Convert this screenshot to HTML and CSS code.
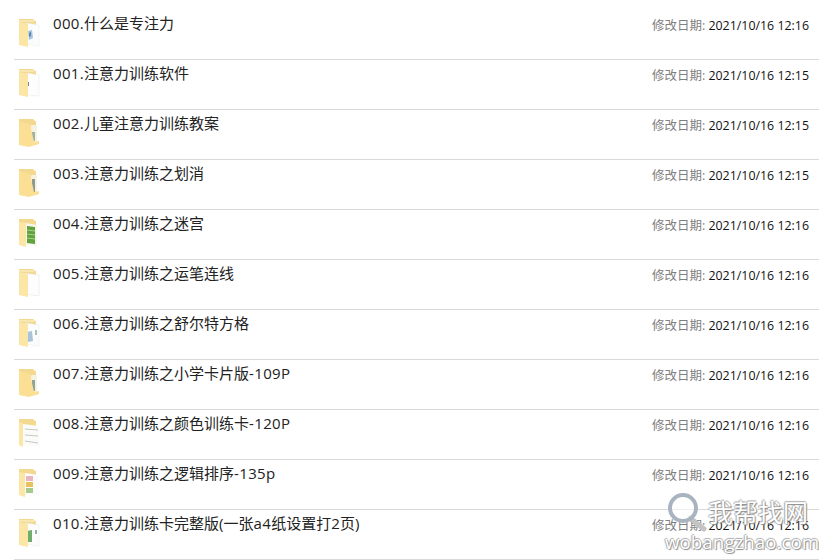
FILE: index.html
```html
<!DOCTYPE html>
<html lang="zh-CN">
<head>
    <meta charset="UTF-8">
    <meta name="viewport" content="width=device-width, initial-scale=1.0">
    <title>注意力训练</title>
    <link rel="stylesheet" href="styles.css">
</head>
<body>
    <svg class="defs" width="0" height="0">
        <symbol id="folder-back" viewBox="0 0 24 32">
            <path d="M2 2 L16 2 L18 4 L19 4 L19 26 L2 28 Z" fill="#f2d98f"/>
        </symbol>
        <symbol id="folder-front" viewBox="0 0 24 32">
            <path d="M2 5 L11 7 L11 30 L2 28 Z" fill="#fbe6a6"/>
            <path d="M2 3 L17 3 L17 5 L2 5 Z" fill="#f8e6b0"/>
        </symbol>
    </svg>

    <ul class="file-list">
        <li class="file-row">
            <svg class="folder" viewBox="0 0 24 32">
                <use href="#folder-back"/>
                <path d="M9 6 L22 8 L22 29 L9 27 Z" fill="#fbfcfd" stroke="#e6e8ea" stroke-width=".5"/>
                <path d="M11 14 L15 13 L16 21 L12 23 Z" fill="#a9c3dc"/>
                <path d="M12 16 L14 15 L14 19 L12 20 Z" fill="#5e86ad"/>
                <use href="#folder-front"/>
            </svg>
            <span class="file-name"><span class="latin">000.</span>什么是专注力</span>
            <span class="file-date"><span class="date-label">修改日期:</span> <span class="date-value">2021/10/16 12:16</span></span>
        </li>
        <li class="file-row">
            <svg class="folder" viewBox="0 0 24 32">
                <use href="#folder-back"/>
                <path d="M10 6 L22 8 L22 29 L10 28 Z" fill="#fdfdfe" stroke="#e6e8ea" stroke-width=".5"/>
                <rect x="10" y="15" width="2" height="4" fill="#7d8aa0"/>
                <use href="#folder-front"/>
            </svg>
            <span class="file-name"><span class="latin">001.</span>注意力训练软件</span>
            <span class="file-date"><span class="date-label">修改日期:</span> <span class="date-value">2021/10/16 12:15</span></span>
        </li>
        <li class="file-row">
            <svg class="folder" viewBox="0 0 24 32">
                <use href="#folder-back"/>
                <path d="M14 8 L20 8 L20 27 L14 28 Z" fill="#f5f2e0"/>
                <rect x="15" y="15" width="3" height="9" fill="#9fb0a4"/>
                <path d="M2 4 L13 7 L17 25 L22 24 L22 27 L12 30 L2 28 Z" fill="#fbdf94"/>
            </svg>
            <span class="file-name"><span class="latin">002.</span>儿童注意力训练教案</span>
            <span class="file-date"><span class="date-label">修改日期:</span> <span class="date-value">2021/10/16 12:15</span></span>
        </li>
        <li class="file-row">
            <svg class="folder" viewBox="0 0 24 32">
                <use href="#folder-back"/>
                <path d="M14 8 L20 8 L20 27 L14 28 Z" fill="#f5f2e0"/>
                <rect x="15" y="12" width="3" height="13" fill="#8d9a90"/>
                <path d="M2 4 L13 7 L17 25 L22 24 L22 27 L12 30 L2 28 Z" fill="#fbdf94"/>
            </svg>
            <span class="file-name"><span class="latin">003.</span>注意力训练之划消</span>
            <span class="file-date"><span class="date-label">修改日期:</span> <span class="date-value">2021/10/16 12:15</span></span>
        </li>
        <li class="file-row">
            <svg class="folder" viewBox="0 0 24 32">
                <use href="#folder-back"/>
                <path d="M9 6 L20 8 L20 29 L9 27 Z" fill="#f4f6ef"/>
                <path d="M10 9 L18 10 L18 27 L10 26 Z" fill="#5fa33a"/>
                <path d="M10 13 L18 14 M10 17 L18 18 M10 21 L18 22" stroke="#a8d08c"/>
                <path d="M2 5 L9 6 L9 30 L2 28 Z" fill="#fbe6a6"/>
            </svg>
            <span class="file-name"><span class="latin">004.</span>注意力训练之迷宫</span>
            <span class="file-date"><span class="date-label">修改日期:</span> <span class="date-value">2021/10/16 12:16</span></span>
        </li>
        <li class="file-row">
            <svg class="folder" viewBox="0 0 24 32">
                <use href="#folder-back"/>
                <path d="M8 6 L22 8 L22 29 L8 27 Z" fill="#fdfdfd" stroke="#dfe1e3" stroke-width=".5"/>
                <use href="#folder-front"/>
            </svg>
            <span class="file-name"><span class="latin">005.</span>注意力训练之运笔连线</span>
            <span class="file-date"><span class="date-label">修改日期:</span> <span class="date-value">2021/10/16 12:16</span></span>
        </li>
        <li class="file-row">
            <svg class="folder" viewBox="0 0 24 32">
                <use href="#folder-back"/>
                <path d="M9 6 L22 8 L22 29 L9 27 Z" fill="#fbfcfd" stroke="#e6e8ea" stroke-width=".5"/>
                <path d="M10 15 L15 14 L16 24 L11 25 Z" fill="#a9c3dc"/>
                <path d="M18 13 L20 13 L20 18 L18 18 Z" fill="#a4c4b4"/>
                <use href="#folder-front"/>
            </svg>
            <span class="file-name"><span class="latin">006.</span>注意力训练之舒尔特方格</span>
            <span class="file-date"><span class="date-label">修改日期:</span> <span class="date-value">2021/10/16 12:16</span></span>
        </li>
        <li class="file-row">
            <svg class="folder" viewBox="0 0 24 32">
                <use href="#folder-back"/>
                <path d="M14 8 L20 8 L20 27 L14 28 Z" fill="#f5f2e0"/>
                <rect x="15" y="13" width="3" height="11" fill="#8fa596"/>
                <path d="M2 4 L13 7 L17 25 L22 24 L22 27 L12 30 L2 28 Z" fill="#fbdf94"/>
            </svg>
            <span class="file-name"><span class="latin">007.</span>注意力训练之小学卡片版<span class="latin">-109P</span></span>
            <span class="file-date"><span class="date-label">修改日期:</span> <span class="date-value">2021/10/16 12:16</span></span>
        </li>
        <li class="file-row">
            <svg class="folder" viewBox="0 0 24 32">
                <use href="#folder-back"/>
                <path d="M6 7 L22 9 L22 29 L6 28 Z" fill="#fbfbf9"/>
                <path d="M8 12 L21 13 M8 18 L21 19 M8 24 L21 26" stroke="#b9b9b5" stroke-width=".8"/>
                <path d="M2 5 L6 6 L6 30 L2 28 Z" fill="#fbe6a6"/>
            </svg>
            <span class="file-name"><span class="latin">008.</span>注意力训练之颜色训练卡<span class="latin">-120P</span></span>
            <span class="file-date"><span class="date-label">修改日期:</span> <span class="date-value">2021/10/16 12:16</span></span>
        </li>
        <li class="file-row">
            <svg class="folder" viewBox="0 0 24 32">
                <use href="#folder-back"/>
                <path d="M8 6 L22 8 L22 29 L8 27 Z" fill="#fbfbfb"/>
                <rect x="9" y="9" width="7" height="5" fill="#e8b6c0"/>
                <rect x="9" y="15" width="7" height="5" fill="#e6c25a"/>
                <rect x="9" y="21" width="7" height="5" fill="#a5c98a"/>
                <path d="M2 5 L8 6 L8 30 L2 28 Z" fill="#fbe6a6"/>
            </svg>
            <span class="file-name"><span class="latin">009.</span>注意力训练之逻辑排序<span class="latin">-135p</span></span>
            <span class="file-date"><span class="date-label">修改日期:</span> <span class="date-value">2021/10/16 12:16</span></span>
        </li>
        <li class="file-row">
            <svg class="folder" viewBox="0 0 24 32">
                <use href="#folder-back"/>
                <path d="M9 6 L22 8 L22 29 L9 27 Z" fill="#fbfcfb" stroke="#e6e8ea" stroke-width=".5"/>
                <path d="M10 14 L15 13 L15 25 L10 25 Z" fill="#6fae6a"/>
                <rect x="18" y="13" width="2" height="4" fill="#8fb5a0"/>
                <use href="#folder-front"/>
            </svg>
            <span class="file-name"><span class="latin">010.</span>注意力训练卡完整版(一张<span class="latin">a4</span>纸设置打<span class="latin">2</span>页)</span>
            <span class="file-date"><span class="date-label">修改日期:</span> <span class="date-value">2021/10/16 12:16</span></span>
        </li>
    </ul>

    <div class="watermark">
        <svg class="magnifier" viewBox="0 0 48 40">
            <path d="M24 26 L38 37" stroke="#c4c4c4" stroke-width="5" stroke-linecap="round"/>
            <circle cx="17" cy="16" r="13" fill="#ffffff" fill-opacity=".55" stroke="#a9b4c0" stroke-width="4"/>
        </svg>
        <div class="mark-cn">我帮找网</div>
        <div class="mark-en">wobangzhao.com</div>
    </div>
</body>
</html>
```

FILE: styles.css
```css
html, body { margin: 0; padding: 0; }
body {
    width: 819px;
    height: 560px;
    overflow: hidden;
    position: relative;
    background: #fff;
    font-family: "Open Sans", "Noto Sans CJK SC", sans-serif;
    color: #222;
}
.defs { position: absolute; }
.file-list { list-style: none; margin: 0; padding: 10px 0 0 14px; }
.file-row {
    height: 49px;
    border-bottom: 1px solid #d9d9d9;
    display: flex;
    align-items: flex-start;
}
.folder { width: 24px; height: 32px; margin: 7px 0 0 3px; flex: none; filter: blur(.3px); }
.file-name {
    margin-left: 12px;
    font-size: 15px;
    line-height: 20px;
    margin-top: 3px;
    flex: 1;
    white-space: nowrap;
}
.latin { letter-spacing: .35px; }
.file-date {
    font-size: 12px;
    line-height: 18px;
    margin-top: 7px;
    margin-right: 10px;
    color: #111;
    white-space: nowrap;
}
.date-label { color: #808080; font-size: 12.5px; }
.date-value { font-size: 12.4px; }
.watermark {
    position: absolute;
    left: 664px;
    top: 490px;
    width: 155px;
    height: 66px;
}
.magnifier { position: absolute; left: 2px; top: 2px; width: 48px; height: 40px; }
.mark-cn {
    position: absolute;
    left: 44px;
    top: 6px;
    font-size: 25px;
    line-height: 30px;
    font-family: "Noto Sans CJK SC", sans-serif;
    color: #fff;
    text-shadow: 1px 1px 1px #888, -1px 0 1px #aaa, 0 -1px 1px #aaa;
}
.mark-en {
    position: absolute;
    left: 1px;
    top: 40px;
    font-size: 18.8px;
    line-height: 24px;
    font-family: "Open Sans", sans-serif;
    color: #fff;
    text-shadow: 1px 1px 1px #888, -1px 0 1px #aaa, 0 -1px 1px #aaa;
}
```
